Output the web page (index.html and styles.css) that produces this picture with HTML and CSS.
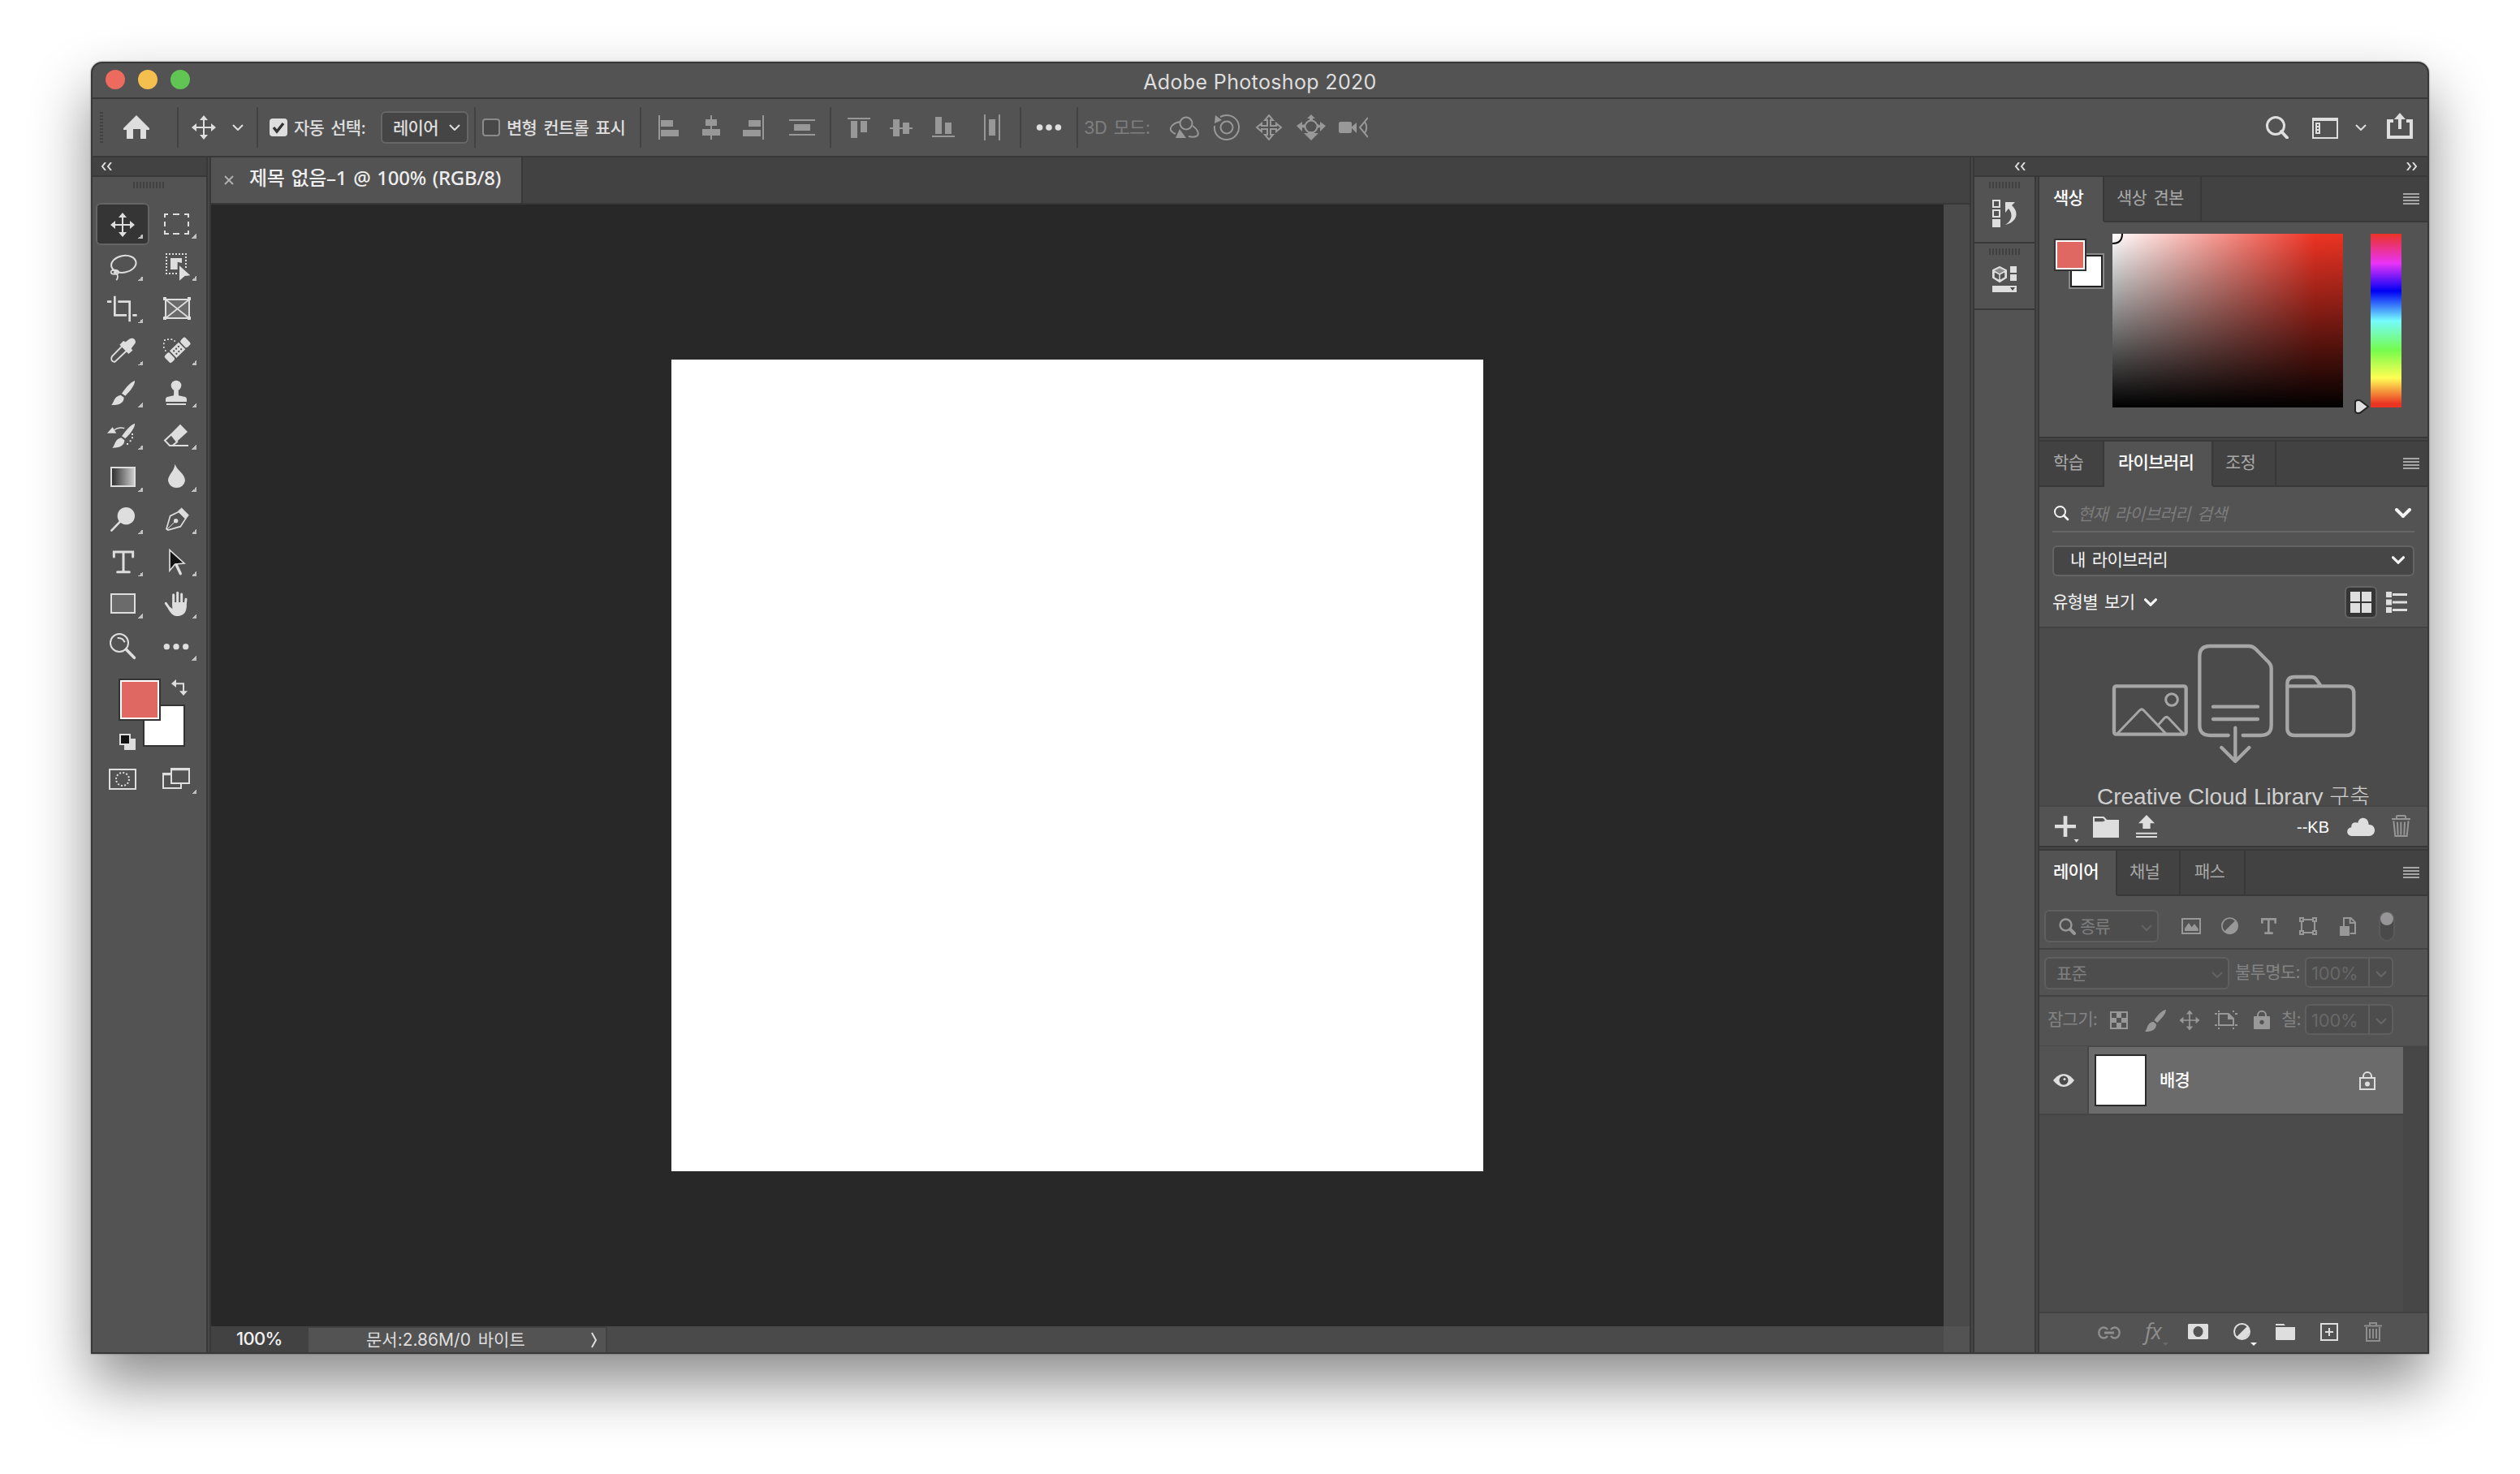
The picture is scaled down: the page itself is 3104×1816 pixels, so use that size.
FILE: index.html
```html
<!DOCTYPE html>
<html lang="ko">
  <head>
    <meta charset="UTF-8" />
    <meta name="viewport" content="width=device-width, initial-scale=1.0" />
    <title>Adobe Photoshop 2020</title>

    <link rel="stylesheet" href="styles.css">
  </head>
  <body>
    <svg class="sprite">
      <symbol id="chevron" viewBox="0 0 14 8">
        <path d="M1 1l6 6 6-6" fill="none" stroke="currentColor" stroke-width="2" />
      </symbol>
      <symbol id="chevron-bold" viewBox="0 0 20 12">
        <path d="M2 2l8 8 8-8" fill="none" stroke="currentColor" stroke-width="4" stroke-linecap="round" />
      </symbol>
      <symbol id="collapse" viewBox="0 0 14 10">
        <path d="M6 0L2 5l4 5M13 0L9 5l4 5" fill="none" stroke="currentColor" stroke-width="2" />
      </symbol>
      <symbol id="move" viewBox="0 0 30 30">
        <path d="M14 5h2v9h9v2h-9v9h-2v-9H5v-2h9z" />
        <path d="M15 0l5 6H10zM15 30l5-6H10zM0 15l6-5v10zM30 15l-6-5v10z" />
      </symbol>
    </svg>

    <div class="window">
      <header class="titlebar">
        <div class="lights">
          <span class="light red"></span>
          <span class="light yellow"></span>
          <span class="light green"></span>
        </div>
        <div class="app-title">Adobe Photoshop 2020</div>
      </header>

      <div class="options">
        <span class="options-grip"></span>
        <svg class="home" width="32" height="30" viewBox="0 0 32 30"><path d="M16 0l16 16v2h-4v11h-7V17H12v12H4V18H0v-2z" /></svg>
        <span class="sep sep-home"></span>
        <svg class="current-tool" width="30" height="30"><use href="#move" /></svg>
        <svg class="tool-chevron" width="14" height="8"><use href="#chevron" /></svg>
        <span class="sep sep-tool"></span>
        <span class="check checked">
          <svg width="22" height="22" viewBox="0 0 22 22"><path d="M5 11l4 5 8-10" fill="none" stroke="#333" stroke-width="3.4" /></svg>
        </span>
        <span class="label auto-select">자동 선택:</span>
        <div class="select layer-select">
          <span>레이어</span>
          <svg width="14" height="8"><use href="#chevron" /></svg>
        </div>
        <span class="sep sep-check"></span>
        <span class="check unchecked"></span>
        <span class="label transform">변형 컨트롤 표시</span>
        <span class="sep sep-transform"></span>

        <div class="align-group">
          <svg width="32" height="32" viewBox="0 0 32 32"><path d="M3 1h2v30H3zM6 7h15v8H6zM6 19h22v8H6z" /></svg>
          <svg width="32" height="32" viewBox="0 0 32 32"><path d="M15 1h2v30h-2zM9 6h14v8H9zM5 18h22v8H5z" /></svg>
          <svg width="32" height="32" viewBox="0 0 32 32"><path d="M27 1h2v30h-2zM10 7h15v8H10zM3 19h22v8H3z" /></svg>
          <svg class="distribute" width="32" height="32" viewBox="0 0 32 32"><path d="M0 6h32v2H0zM0 24h32v2H0zM6 12h20v8H6z" /></svg>
        </div>
        <span class="sep"></span>
        <div class="align-group">
          <svg width="32" height="32" viewBox="0 0 32 32"><path d="M2 4h28v2H2zM6 8h8v21H6zM18 8h8v14h-8z" /></svg>
          <svg width="32" height="32" viewBox="0 0 32 32"><path d="M2 16h28v2H2zM6 6h8v21H6zM18 10h8v14h-8z" /></svg>
          <svg width="32" height="32" viewBox="0 0 32 32"><path d="M2 26h28v2H2zM6 3h8v21H6zM18 10h8v14h-8z" /></svg>
          <svg class="distribute" width="32" height="32" viewBox="0 0 32 32"><path d="M6 0h2v32H6zM24 0h2v32h-2zM12 6h8v20h-8z" /></svg>
        </div>
        <span class="sep"></span>
        <svg class="more" width="32" height="8" viewBox="0 0 32 8"><circle cx="4.600" cy="4" r="3.800" /><circle cx="16" cy="4" r="3.800" /><circle cx="27.400" cy="4" r="3.800" /></svg>
        <span class="sep"></span>
        <span class="label mode">3D 모드:</span>
        <div class="mode-group">
          <svg width="36" height="32" viewBox="0 0 36 32">
            <g fill="none" stroke="currentColor" stroke-width="2">
              <circle cx="20" cy="11" r="7.500" />
              <path d="M13 9C5 10 0 15 1 19c1 3 4 4 6 5M28 14c6 4 8 9 6 12-2 2-6 2-11 1" />
            </g>
            <path d="M12 18l8 11H7z" />
          </svg>
          <svg width="36" height="32" viewBox="0 0 36 32">
            <g fill="none" stroke="currentColor" stroke-width="2">
              <circle cx="18" cy="16" r="7.500" />
              <path d="M10 3C18-1 28 1 32 10c4 11-4 21-14 21C8 31 2 23 3 14" />
            </g>
            <path d="M4 1l8 6-9 4z" />
          </svg>
          <svg width="36" height="32" viewBox="0 0 36 32">
            <path d="M18 1l5 6h-3v7h7v-3l6 5-6 5v-3h-7v7h3l-5 6-5-6h3v-7H9v3l-6-5 6-5v3h7V7h-3z" fill="none" stroke="currentColor" stroke-width="2" />
          </svg>
          <svg width="36" height="32" viewBox="0 0 36 32">
            <circle cx="18" cy="15" r="7.500" fill="none" stroke="currentColor" stroke-width="2" />
            <path d="M18 0l5 5h-3v3h-4V5h-3zM0 14l7-5v4l4-1v5l-4-1v5zM36 14l-7-5v4l-4-1v5l4-1v5zM18 32l9-9-5 0v-2h-8v2H9z" />
          </svg>
          <svg width="36" height="32" viewBox="0 0 36 32">
            <rect y="9" width="16" height="14" rx="2" />
            <path d="M15 16l7-6v13z" />
            <path d="M36 4L26 16l10 12M32 9c3 4 3 10 0 14" fill="none" stroke="currentColor" stroke-width="2" />
          </svg>
        </div>

        <div class="options-right">
          <svg width="28" height="28" viewBox="0 0 28 28"><circle cx="12" cy="12" r="10.500" fill="none" stroke="currentColor" stroke-width="3" /><path d="M19 19l7 7.500" stroke="currentColor" stroke-width="4" stroke-linecap="round" /></svg>
          <svg class="arrange" width="32" height="26" viewBox="0 0 32 26"><path d="M0 0h32v26H0zM2 4v20h28V4z" fill-rule="evenodd" /><path d="M4 6h6v14H4zM6 8v2h2V8zM6 12v2h2v-2zM6 16v2h2v-2z" fill-rule="evenodd" /></svg>
          <svg class="arrange-chevron" width="14" height="8"><use href="#chevron" /></svg>
          <svg class="share" width="32" height="32" viewBox="0 0 32 32"><path d="M16 0l7 8h-5v12h-4V8H9zM0 8h8v4H4v16h24V12h-4V8h8v24H0z" /></svg>
        </div>
      </div>

      <div class="workspace">
        <aside class="toolbox">
          <div class="dock-header toolbox-header">
            <svg width="14" height="10"><use href="#collapse" /></svg>
          </div>
          <span class="grip"></span>

          <div class="tools">
            <div class="tool active">
              <svg width="66" height="52" viewBox="0 0 66 52"><use href="#move" x="18" y="12" width="30" height="30" /></svg>
            </div>
            <div class="tool">
              <svg width="66" height="52" viewBox="252 180 198 156"><path d="M309 234v-12h12M339 222h24M381 222h15v12M396 249v18M396 282v12h-15M363 294h-24M324 294h-15v-12M309 267v-18" fill="none" stroke="currentColor" stroke-width="6" /></svg>
            </div>
            <div class="tool">
              <svg width="66" height="52" viewBox="54 336 198 156"><g fill="none" stroke="currentColor" stroke-width="6"><ellipse cx="157" cy="406" rx="46" ry="31" transform="rotate(-10 157 406)" /><ellipse cx="124" cy="436" rx="14" ry="8" stroke-width="5" /><path d="M120 434c14 6 20 18 10 32M136 430l-16 12" stroke-width="5" /></g></svg>
            </div>
            <div class="tool">
              <svg width="66" height="52" viewBox="252 336 198 156"><path d="M312 369h78M315 378v66M387 378v42M324 441h36" fill="none" stroke="currentColor" stroke-width="6" stroke-dasharray="6 6" /><path d="M330 384h42v18l-16-4v28h-26zM363 412l40 36-20 2-20 17z" /></svg>
            </div>
            <div class="tool">
              <svg width="66" height="52" viewBox="54 492 198 156"><path d="M96 545h16M124 524v71h44M136 545h43v74M190 595h16" fill="none" stroke="currentColor" stroke-width="8" /></svg>
            </div>
            <div class="tool no-corner">
              <svg width="66" height="52" viewBox="252 492 198 156"><rect x="312" y="537" width="87" height="69" fill="#6b6b6b" stroke="currentColor" stroke-width="6" /><path d="M312 537l87 69M399 537l-87 69" stroke="currentColor" stroke-width="5" /><path d="M303 528h12v12h-12zM393 528h12v12h-12zM303 600h12v12h-12zM393 600h12v12h-12z" /></svg>
            </div>
            <div class="tool">
              <svg width="66" height="52" viewBox="54 648 198 156"><path d="M154 706l-40 41c-6 10-1 22 11 20l44-42" fill="none" stroke="currentColor" stroke-width="6" /><path d="M142 704l14-14 8 4 16-12c12-6 24 4 20 16l-15 20 5 7-15 13z" /></svg>
            </div>
            <div class="tool">
              <svg width="66" height="52" viewBox="252 648 198 156"><g transform="rotate(-44 356 724)"><rect x="303" y="706" width="25" height="36" rx="7" /><rect x="384" y="706" width="25" height="36" rx="7" /><rect x="333" y="706" width="46" height="36" /><g fill="#535353"><circle cx="344" cy="717" r="3.500" /><circle cx="356" cy="717" r="3.500" /><circle cx="368" cy="717" r="3.500" /><circle cx="344" cy="731" r="3.500" /><circle cx="356" cy="731" r="3.500" /><circle cx="368" cy="731" r="3.500" /></g></g><path d="M303 697h5v6h-5zM303 711h5v6h-5zM309 724h5v5h-5zM306 685h6v5h-6zM318 682h6v5h-6zM331 682h6v5h-6zM343 688h5v5h-5z" /></svg>
            </div>
            <div class="tool">
              <svg width="66" height="52" viewBox="54 804 198 156"><path d="M198 837c2 12-14 36-35 56l-13-9c14-20 32-42 48-47zM146 890l12 9c0 18-14 29-47 28 10-6 8-32 35-37z" /></svg>
            </div>
            <div class="tool">
              <svg width="66" height="52" viewBox="252 804 198 156"><circle cx="351" cy="855" r="19" /><path d="M343 868h16l1 24 24 5q6 2 6 8v10h-78v-10q0-6 6-8l24-5zM315 921h72v6h-72z" /></svg>
            </div>
            <div class="tool">
              <svg width="66" height="52" viewBox="54 960 198 156"><path d="M198 995c2 12-14 36-35 56l-13-9c14-20 32-42 48-47zM148 1048l12 9c0 18-14 29-45 28 10-6 8-32 33-37zM96 1031l20-22 14 22z" /><path d="M122 1019q16-12 38-6" fill="none" stroke="currentColor" stroke-width="4" /><path d="M186 1032h6v6h-6zM186 1045h6v6h-6zM179 1057h6v6h-6zM168 1068h6v6h-6z" /></svg>
            </div>
            <div class="tool">
              <svg width="66" height="52" viewBox="252 960 198 156"><path d="M366 998l27 28-42 38-22-28z" /><path d="M333 1036l-24 22 18 19h10l20-16M325 1077h71" fill="none" stroke="currentColor" stroke-width="6" /></svg>
            </div>
            <div class="tool">
              <svg width="66" height="52" viewBox="54 1116 198 156"><defs><linearGradient id="tool-gradient"><stop offset="0" stop-color="#2b2b2b" /><stop offset="1" stop-color="#d0d0d0" /></linearGradient></defs><rect x="111" y="1158" width="87" height="69" fill="url(#tool-gradient)" stroke="currentColor" stroke-width="6" /></svg>
            </div>
            <div class="tool">
              <svg width="66" height="52" viewBox="252 1116 198 156"><path d="M346 1145c10 26 38 36 38 62a32 32 0 0 1-63 0c0-24 24-34 25-62z" /></svg>
            </div>
            <div class="tool">
              <svg width="66" height="52" viewBox="54 102 198 156"><circle cx="166" cy="167" r="32" /><path d="M144 188l-32 33" stroke="currentColor" stroke-width="8" stroke-linecap="round" /></svg>
            </div>
            <div class="tool">
              <svg width="66" height="52" viewBox="252 102 198 156"><path d="M362 151l-33 16-14 48 6 4 46-13 20-31z" fill="none" stroke="currentColor" stroke-width="5" /><path d="M371 138l26 26-11 14-28-28zM317 217l30-29" stroke="currentColor" stroke-width="3" /><circle cx="350" cy="185" r="8" /></svg>
            </div>
            <div class="tool">
              <svg width="66" height="52" viewBox="54 258 198 156"><path d="M121 318v-18h70v18M156 300v74M134 374h44" fill="none" stroke="currentColor" stroke-width="9" stroke-linecap="round" /></svg>
            </div>
            <div class="tool">
              <svg width="66" height="52" viewBox="252 258 198 156"><path d="M350 344l17 36" stroke="currentColor" stroke-width="10" stroke-linecap="round" /><path d="M327 293v76l20-24 34-3z" fill="#111" stroke="currentColor" stroke-width="5" /></svg>
            </div>
            <div class="tool">
              <svg width="66" height="52" viewBox="54 414 198 156"><rect x="111" y="456" width="87" height="69" fill="#6b6b6b" stroke="currentColor" stroke-width="6" /></svg>
            </div>
            <div class="tool">
              <svg width="66" height="52" viewBox="252 414 198 156"><path d="M341 458v40M356 451v40M371 456v40M387 475l-3 28M313 490l16 23" stroke="currentColor" stroke-width="9" stroke-linecap="round" /><path d="M337 486h43l9 10c2 28-12 41-32 41-19 0-27-12-36-28l8-5 8 6z" /></svg>
            </div>
            <div class="tool no-corner">
              <svg width="66" height="52" viewBox="54 570 198 156"><circle cx="141" cy="636" r="33" fill="none" stroke="currentColor" stroke-width="6" /><path d="M134 618q20-2 27 16" fill="none" stroke="currentColor" stroke-width="6" /><path d="M166 660l30 31" stroke="currentColor" stroke-width="11" stroke-linecap="round" /></svg>
            </div>
            <div class="tool">
              <svg width="66" height="52" viewBox="252 570 198 156"><circle cx="316" cy="650" r="11" /><circle cx="351" cy="650" r="11" /><circle cx="386" cy="650" r="11" /></svg>
            </div>
          </div>

          <div class="tool-colors">
            <span class="bg-color"></span>
            <span class="fg-color"></span>
            <svg class="swap" width="20" height="20" viewBox="333 771 60 60"><path d="M345 787h33v30" fill="none" stroke="currentColor" stroke-width="6" /><path d="M333 787l18-16v30zM378 831l-15-17h30z" /></svg>
            <svg class="reset" width="20" height="20" viewBox="141 972 60 60"><path d="M159 990h42v42h-42z" /><path d="M144 975h36v36h-36z" fill="#111" stroke="currentColor" stroke-width="6" /></svg>
          </div>

          <div class="tools modes">
            <div class="tool no-corner">
              <svg width="66" height="52" viewBox="54 1062 198 156"><path d="M105 1104h96v72h-96z" fill="none" stroke="currentColor" stroke-width="6" /><circle cx="153" cy="1140" r="24" fill="none" stroke="currentColor" stroke-width="6" stroke-dasharray="6 6.560" /></svg>
            </div>
            <div class="tool">
              <svg width="66" height="52" viewBox="252 1062 198 156"><path d="M330 1119h-27v54h66v-15M333 1101h66v54h-66z" fill="none" stroke="currentColor" stroke-width="6" /><path d="M300 1116h30v10h-30zM330 1098h72v10h-72z" /></svg>
            </div>
          </div>
        </aside>

        <span class="gutter"></span>

        <main class="document">
          <div class="doc-tabs">
            <div class="doc-tab">
              <svg width="12" height="12" viewBox="0 0 12 12"><path d="M1 1l10 10M11 1L1 11" stroke="currentColor" stroke-width="2" /></svg>
              <span>제목 없음–1 @ 100% (RGB/8)</span>
            </div>
          </div>
          <div class="stage">
            <div class="pasteboard">
              <div class="artboard"></div>
            </div>
            <div class="scroll-y"></div>
          </div>
          <div class="statusbar">
            <div class="zoom">100%</div>
            <div class="doc-size">
              <span>문서:2.86M/0 바이트</span>
              <svg width="8" height="20" viewBox="0 0 8 20"><path d="M1 1l5 9-5 9" fill="none" stroke="currentColor" stroke-width="2" /></svg>
            </div>
            <div class="scroll-x"></div>
            <div class="scroll-corner"></div>
          </div>
        </main>

        <span class="gutter"></span>

        <aside class="dock">
          <div class="dock-header">
            <svg class="expand-strip" width="14" height="10"><use href="#collapse" /></svg>
            <svg class="collapse-panels" width="14" height="10"><use href="#collapse" /></svg>
          </div>
          <div class="dock-body">
            <div class="strip">
              <div class="strip-item">
                <span class="grip"></span>
                <svg width="30" height="34" viewBox="0 0 30 34"><path d="M1 1h8v8H1zM1 13h8v8H1z" fill="none" stroke="currentColor" stroke-width="2" /><path d="M0 24h10v10H0zM16 3h12l-4 4c10 9 6 21-8 24 8-5 10-13 4-20l-4 5z" /></svg>
              </div>
              <div class="strip-item">
                <span class="grip"></span>
                <svg width="30" height="32" viewBox="0 0 30 32"><path d="M1 5l8-4 8 4v9l-8 5-8-5z" fill="#8a8a8a" stroke="currentColor" stroke-width="2" /><path d="M2 6l7 4v8l-7-4zM16 6l-7 4v8l7-4z" fill="#535353" stroke="currentColor" stroke-width="1.500" /><path d="M22 0h8v8h-8zM22 10h8v8h-8zM0 24h30v8H0z" /><path d="M22 26h6l-3 4z" fill="#444" /></svg>
              </div>
            </div>
            <span class="gutter"></span>

            <div class="panels">
              <section class="panel">
                <div class="tabs">
                  <div class="tab active color-tab">색상</div>
                  <div class="tab swatch-tab">색상 견본</div>
                  <div class="tabs-rest"><span class="menu"></span></div>
                </div>
                <div class="color-body">
                  <div class="color-swatches">
                    <span class="bg-swatch"></span>
                    <span class="fg-swatch"></span>
                  </div>
                  <div class="color-field">
                    <svg width="13" height="13" viewBox="0 0 13 13"><path d="M12 0Q12 12 0 12" fill="none" stroke="#000" stroke-width="2" /></svg>
                  </div>
                  <svg class="hue-arrow" width="18" height="18" viewBox="0 0 18 18"><path d="M1 4q0-3 4-3 2 0 3 1l9 7-9 7q-1 1-3 1-4 0-4-3z" fill="#e0e0e0" stroke="#222" stroke-width="2" /></svg>
                  <div class="hue"></div>
                </div>
              </section>

              <section class="panel library">
                <div class="tabs">
                  <div class="tab learn-tab">학습</div>
                  <div class="tab active library-tab">라이브러리</div>
                  <div class="tab adjust-tab">조정</div>
                  <div class="tabs-rest"><span class="menu"></span></div>
                </div>
                <div class="library-top">
                  <div class="search">
                    <svg width="19" height="19" viewBox="0 0 19 19"><circle cx="7.500" cy="7.500" r="6.500" fill="none" stroke="currentColor" stroke-width="2" /><path d="M12 12l5 5" stroke="currentColor" stroke-width="2.600" stroke-linecap="round" /></svg>
                    <span>현재 라이브러리 검색</span>
                    <svg class="search-chevron" width="20" height="12"><use href="#chevron-bold" /></svg>
                  </div>
                  <div class="library-select">
                    <span>내 라이브러리</span>
                    <svg width="16" height="10"><use href="#chevron-bold" /></svg>
                  </div>
                  <div class="view-row">
                    <span>유형별 보기</span>
                    <svg class="view-chevron" width="16" height="10"><use href="#chevron-bold" /></svg>
                    <div class="grid-view">
                      <svg width="26" height="26" viewBox="0 0 26 26"><path d="M0 0h12v12H0zM14 0h12v12H14zM0 14h12v12H0zM14 14h12v12H14z" /></svg>
                    </div>
                    <svg class="list-view" width="26" height="26" viewBox="0 0 26 26"><path d="M0 0h7v7H0zM0 9.500h7v7H0zM0 19h7v7H0zM8 2h18v3H8zM8 11.500h18v3H8zM8 21h18v3H8z" /></svg>
                  </div>
                </div>
                <div class="library-empty">
                  <svg width="478" height="170" viewBox="36 12 1434 510">
                    <g fill="none" stroke="currentColor" stroke-width="13" stroke-linecap="round" stroke-linejoin="round">
                      <rect x="312" y="226" width="266" height="178" rx="8" />
                      <circle cx="525" cy="276" r="22" stroke-width="9" />
                      <path d="M324 401l83-86q7-7 14 0l82 86M475 370l24-27q6-6 13 0l55 58" stroke-width="9" />
                      <path d="M734 408h-68q-38 0-38-38V116q0-38 38-38h144q14 0 24 10l49 49q10 10 10 24v209q0 38-38 38h-67M678 302h165M678 348h165M760 380v120M709 453l51 51 51-51" />
                      <path d="M952 226h220q26 0 26 26v130q0 26-26 26H978q-26 0-26-26V218q0-26 26-26h62q12 0 18 8l16 22" />
                    </g>
                  </svg>
                  <p>Creative Cloud Library <span>구축</span></p>
                </div>
                <div class="library-footer">
                  <svg class="add" width="30" height="48" viewBox="93 672 90 144"><path d="M125 706h14v32h32v13h-32v32h-14v-32H93v-13h32zM164 792h18l-9 12z" /></svg>
                  <svg class="new-folder" width="32" height="48" viewBox="234 672 96 144"><path d="M234 708h40l12 12h44v66h-96zM240 714v13h30l9-4-8-9z" fill-rule="evenodd" /></svg>
                  <svg class="upload" width="26" height="48" viewBox="393 672 78 144"><path d="M432 702l30 31h-16v20h-28v-20h-16zM393 767h78v6h-78zM393 780h78v6h-78z" /></svg>
                  <span class="size">--KB</span>
                  <svg class="cloud" width="34" height="48" viewBox="1173 672 102 144"><path d="M1190 780a16 16 0 0 1-1-32q-2-18 16-18 6 0 8 1c4-26 40-24 40 7 28-2 30 40 2 42z" /></svg>
                  <svg class="trash" width="23" height="48" viewBox="1338 672 69 144"><path d="M1356 714v-6q0-3 3-3h27q3 0 3 3v6M1338 717h69M1345 724l6 56h43l6-56M1359 728l2 48M1372 728v48M1386 728l-2 48" fill="none" stroke="currentColor" stroke-width="6" /></svg>
                </div>
              </section>

              <section class="panel layers">
                <div class="tabs">
                  <div class="tab active layer-tab">레이어</div>
                  <div class="tab channel-tab">채널</div>
                  <div class="tab path-tab">패스</div>
                  <div class="tabs-rest"><span class="menu"></span></div>
                </div>

                <div class="filter-row">
                  <div class="field kind">
                    <svg width="21" height="21" viewBox="0 0 21 21"><circle cx="8.500" cy="8.500" r="7" fill="none" stroke="currentColor" stroke-width="2.400" /><path d="M14 14l5 5" stroke="currentColor" stroke-width="4" stroke-linecap="round" /></svg>
                    <span>종류</span>
                    <svg class="field-chevron" width="14" height="8"><use href="#chevron" /></svg>
                  </div>
                  <svg class="filter-image" width="24" height="40" viewBox="561 243 72 120"><path d="M561 273h72v60h-72zM567 279v48h60v-48z" fill-rule="evenodd" /><path d="M573 321v-10l15-20 11 16 10-12 14 18v8z" /></svg>
                  <svg class="filter-adjust" width="21" height="40" viewBox="708 243 63 120"><circle cx="739.500" cy="302" r="29" fill="none" stroke="currentColor" stroke-width="5" /><path d="M761 281l-43 43a30 30 0 0 0 43-43z" /></svg>
                  <svg class="filter-type" width="19" height="40" viewBox="855 243 57 120"><path d="M859 290v-13h49v13M883 277v52M871 329h25" fill="none" stroke="currentColor" stroke-width="8" stroke-linecap="round" /></svg>
                  <svg class="filter-shape" width="22" height="40" viewBox="996 243 66 120"><path d="M1005 279h48v48h-48z" fill="none" stroke="currentColor" stroke-width="6" /><path d="M999 273h12v12h-12zM1047 273h12v12h-12zM999 321h12v12h-12zM1047 321h12v12h-12z" fill="#535353" stroke="currentColor" stroke-width="6" /></svg>
                  <svg class="filter-smart" width="20" height="40" viewBox="1146 243 60 120"><path d="M1161 303v-30h26l16 16v41h-19M1184 273v18h19" fill="none" stroke="currentColor" stroke-width="6" /><path d="M1146 303h36v36h-36z" /></svg>
                  <div class="filter-toggle"></div>
                </div>

                <div class="blend-row">
                  <div class="field blend">
                    <span>표준</span>
                    <svg class="field-chevron" width="14" height="8"><use href="#chevron" /></svg>
                  </div>
                  <span class="row-label opacity-label">불투명도:</span>
                  <div class="number">
                    <span>100%</span>
                    <i><svg width="14" height="8"><use href="#chevron" /></svg></i>
                  </div>
                </div>

                <div class="lock-row">
                  <span class="row-label lock-label">잠그기:</span>
                  <svg class="lock-pixels" width="22" height="40" viewBox="297 591 66 120"><path d="M297 618h66v66h-66zM303 624v18h18v-18zM339 624v18h18v-18zM321 642v18h18v-18zM303 660v18h18v-18zM339 660v18h18v-18z" fill-rule="evenodd" /></svg>
                  <svg class="lock-brush" width="26" height="40" viewBox="426 591 78 120"><path d="M504 612c0 14-14 30-32 48l-12-9c12-18 30-38 44-39zM457 656l11 9c0 18-12 28-42 28 10-8 6-34 31-37z" /></svg>
                  <svg class="lock-move" width="26" height="40" viewBox="-0.500 -5 31 40"><use href="#move" x="0" y="0" width="30" height="30" /></svg>
                  <svg class="lock-artboard" width="28" height="40" viewBox="684 591 84 120"><path d="M699 627h36l18 18v24h-54z" fill="none" stroke="currentColor" stroke-width="6" /><path d="M732 624v24h24zM684 624h9v6h-9zM696 615h6v6h-6zM750 615h6v6h-6zM759 624h9v6h-9zM684 666h9v6h-9zM759 666h9v6h-9zM696 678h6v6h-6zM750 678h6v6h-6z" /></svg>
                  <svg class="lock-all" width="20" height="40" viewBox="828 591 60 120"><path d="M843 636v-4a15 15 0 0 1 30 0v4" fill="none" stroke="currentColor" stroke-width="6" /><path d="M831 636h54q3 0 3 3v42q0 3-3 3h-54q-3 0-3-3v-42q0-3 3-3zM858 650a8 8 0 1 0 .1 0z" fill-rule="evenodd" /></svg>
                  <span class="row-label fill-label">칠:</span>
                  <div class="number">
                    <span>100%</span>
                    <i><svg width="14" height="8"><use href="#chevron" /></svg></i>
                  </div>
                </div>

                <div class="layer-area">
                  <div class="layer-list">
                    <div class="layer">
                      <div class="visibility">
                        <svg width="26" height="16" viewBox="0 0 26 16"><path d="M0 8C8-2.500 18-2.500 26 8 18 18.500 8 18.500 0 8z" /><circle cx="13" cy="8" r="5.500" fill="#4a4a4a" /><circle cx="14" cy="6.500" r="1.500" /></svg>
                      </div>
                      <div class="layer-main">
                        <span class="thumb"></span>
                        <span class="layer-name">배경</span>
                        <svg width="20" height="23" viewBox="0 0 20 23"><path d="M5 8V6a5 5 0 0 1 10 0v2M1 8h18v14H1z" fill="none" stroke="currentColor" stroke-width="2" /><circle cx="10" cy="15.500" r="3" /></svg>
                      </div>
                    </div>
                  </div>
                  <div class="layer-scroll"></div>
                </div>

                <div class="layers-footer">
                  <svg class="link" width="28" height="48" viewBox="0 0 28 48"><path d="M12 20a6 6.500 0 1 0 0 8M16 20a6 6.500 0 1 1 0 8" fill="none" stroke="currentColor" stroke-width="2.400" /><path d="M8 22.500h12v3H8z" /></svg>
                  <div class="fx">fx<svg width="7" height="4" viewBox="0 0 8 4"><path d="M0 0h8L4 4z" /></svg></div>
                  <svg class="mask" width="25" height="48" viewBox="0 0 25 48"><path d="M1 13h23l1 1v17l-1 1H1l-1-1V14zM12.500 16a6 6.500 0 1 0 .1 0z" fill-rule="evenodd" /></svg>
                  <svg class="adjust" width="29" height="48" viewBox="0 0 29 48"><circle cx="10.500" cy="22.500" r="9.500" fill="none" stroke="currentColor" stroke-width="2" /><path d="M17.500 15.500l-14 14a10 10 0 0 0 14-14z" /><path d="M21 36h8l-4 4z" fill="#fff" /></svg>
                  <svg class="group" width="24" height="48" viewBox="0 0 24 48"><path d="M0 13h10l2 2H0zM0 17h24v15q0 1-1 1H1q-1 0-1-1z" /></svg>
                  <svg class="new-layer" width="22" height="48" viewBox="0 0 22 48"><path d="M1 13h20v20H1z" fill="none" stroke="currentColor" stroke-width="2" /><path d="M10 18h2v4h4v2h-4v4h-2v-4H6v-2h4z" /></svg>
                  <svg class="delete" width="22" height="48" viewBox="0 0 22 48"><path d="M7 15v-3h8v3M0 15.500h22M3 17v17h16V17M7 19v12M11 19v12M15 19v12" fill="none" stroke="currentColor" stroke-width="2" /></svg>
                </div>
              </section>
            </div>
          </div>
        </aside>
      </div>
    </div>
  </body>
</html>
```

FILE: styles.css
```css
* {
  box-sizing: border-box;
}

body {
  min-height: 1816px;
  margin: 0;
  padding: 76px 112px 0;
  background: #fff;
  font-family: Inter, "Noto Sans CJK KR", sans-serif;
  font-size: 21px;
  line-height: 1;
  letter-spacing: -0.7px;
  word-spacing: 3px;
  white-space: nowrap;
  color: #dedede;
}

svg {
  display: block;
  flex: none;
  fill: currentColor;
}

.sprite {
  position: absolute;
  width: 0;
  height: 0;
}

.window {
  display: flex;
  flex-direction: column;
  width: 2880px;
  height: 1592px;
  border: 2px solid #383838;
  border-radius: 14px 14px 0 0;
  background: #535353;
  box-shadow: 0 0 2px rgba(0, 0, 0, 0.5), 0 36px 72px rgba(0, 0, 0, 0.46);
  overflow: hidden;
}

/* title bar */

.titlebar {
  position: relative;
  flex: none;
  height: 44px;
  border-bottom: 2px solid #383838;
}

.lights {
  position: absolute;
  top: 8px;
  left: 16px;
  display: flex;
  gap: 16px;
}

.light {
  width: 24px;
  height: 24px;
  border-radius: 50%;
}

.red {
  background: #ec6a5e;
}

.yellow {
  background: #f5bf4f;
}

.green {
  background: #61c554;
}

.app-title {
  text-align: center;
  font-size: 25px;
  line-height: 46px;
  letter-spacing: 0.35px;
  word-spacing: 0;
}

/* options bar */

.options {
  display: flex;
  flex: none;
  align-items: center;
  height: 72px;
  border-bottom: 2px solid #383838;
}

.options-grip {
  width: 4px;
  height: 38px;
  margin-left: 9px;
  background: repeating-linear-gradient(#414141 0 2px, transparent 2px 4px);
}

.home {
  margin-left: 25px;
}

.sep {
  width: 2px;
  height: 50px;
  margin-left: 18px;
  background: #424242;
}

.sep-home {
  margin-left: 34px;
}

.current-tool {
  margin-left: 16px;
}

.tool-chevron {
  margin-left: 20px;
}

.sep-tool {
  margin-left: 16px;
}

.label {
  font-weight: 500;
}

.check {
  width: 22px;
  height: 22px;
  border-radius: 4px;
}

.checked {
  margin-left: 14px;
  background: #dedede;
}

.unchecked {
  margin-left: 8px;
  border: 2px solid #8a8a8a;
  background: #484848;
}

.auto-select {
  width: 99px;
  margin-left: 8px;
}

.select {
  display: flex;
  align-items: center;
  justify-content: space-between;
  width: 108px;
  height: 40px;
  margin-left: 8px;
  padding: 0 8px 0 13px;
  border: 2px solid #666;
  border-radius: 6px;
  background: #454545;
  font-weight: 500;
}

.sep-check {
  margin-left: 7px;
}

.transform {
  width: 154px;
  margin-left: 8px;
}

.sep-transform {
  margin-left: 10px;
}

.align-group {
  display: flex;
  gap: 20px;
  margin-left: 18px;
  color: #989898;
}

.distribute {
  margin-left: 8px;
}

.more {
  margin-left: 18px;
}

.mode {
  width: 86px;
  margin-left: 7px;
  font-size: 22px;
  font-weight: 400;
  color: #7f7f7f;
}

.mode-group {
  display: flex;
  gap: 16px;
  margin-left: 20px;
  color: #989898;
}

.options-right {
  display: flex;
  align-items: center;
  margin: 0 18px 0 auto;
}

.arrange {
  margin: 2px 0 0 29px;
}

.arrange-chevron {
  margin-left: 21px;
}

.share {
  margin: -4px 0 0 25px;
}

/* workspace */

.workspace {
  display: flex;
  flex: 1;
}

.gutter {
  flex: none;
  width: 6px;
  border: solid #383838;
  border-width: 0 2px;
  background: #474747;
}

.dock-header {
  display: flex;
  flex: none;
  align-items: center;
  height: 24px;
  border-bottom: 2px solid #383838;
  background: #424242;
}

.grip {
  display: block;
  width: 38px;
  height: 8px;
  background: repeating-linear-gradient(90deg, #414141 0 2px, transparent 2px 4px);
}

.toolbox {
  flex: none;
  width: 140px;
}

.toolbox-header {
  padding-left: 10px;
}

.toolbox > .grip {
  margin: 6px 0 18px 50px;
}

.tools {
  display: grid;
  grid-template-columns: 66px 66px;
  grid-auto-rows: 52px;
  margin-left: 4px;
}

.tool {
  position: relative;
}

.tool.active {
  border: 2px solid #646464;
  border-radius: 6px;
  background: #353535;
}

.tool.active > svg {
  margin: -2px;
}

.tool::after {
  content: "";
  position: absolute;
  right: 8px;
  bottom: 8px;
  width: 6px;
  height: 6px;
  background: linear-gradient(135deg, transparent 50%, #c0c0c0 50%);
}

.tool.active::after {
  right: 6px;
  bottom: 6px;
}

.tool.no-corner::after {
  display: none;
}

.tool-colors {
  position: relative;
  height: 112px;
}

.fg-color,
.bg-color {
  position: absolute;
  width: 52px;
  height: 52px;
  border: 2px solid #333;
}

.fg-color {
  top: 14px;
  left: 32px;
  background: #e06863;
  box-shadow: inset 0 0 0 2px #fff;
}

.bg-color {
  top: 46px;
  left: 62px;
  background: #fff;
}

.swap {
  position: absolute;
  top: 15px;
  left: 97px;
}

.reset {
  position: absolute;
  top: 82px;
  left: 33px;
}

/* document */

.document {
  display: flex;
  flex-direction: column;
  flex: none;
  width: 2166px;
}

.doc-tabs {
  height: 58px;
  border-bottom: 2px solid #383838;
  background: #424242;
}

.doc-tab {
  display: flex;
  align-items: center;
  gap: 19px;
  width: 384px;
  height: 56px;
  padding: 0 0 4px 16px;
  border-right: 2px solid #383838;
  background: #535353;
  font-family: "Noto Sans", "Noto Sans CJK KR", sans-serif;
  font-size: 24px;
  font-weight: 500;
  letter-spacing: -0.3px;
  word-spacing: 2px;
  color: #eee;
}

.doc-tab > span {
  margin-top: -2px;
}

.doc-tab > svg {
  margin-top: 4px;
  color: #b0b0b0;
}

.stage {
  display: flex;
  flex: 1;
}

.pasteboard {
  flex: 1;
  padding: 191px 0 0 567px;
  background: #282828;
}

.artboard {
  width: 1000px;
  height: 1000px;
  background: #fff;
}

.scroll-y {
  width: 32px;
  background: #4a4a4a;
}

.statusbar {
  display: flex;
  height: 32px;
  background: #424242;
}

.zoom {
  width: 120px;
  padding-left: 31px;
  font-weight: 500;
  font-size: 22px;
  line-height: 31px;
  color: #f2f2f2;
}

.doc-size {
  display: flex;
  align-items: center;
  justify-content: space-between;
  width: 368px;
  margin-top: 2px;
  padding: 0 10px 0 71px;
  border-right: 2px solid #424242;
  background: #535353;
  letter-spacing: 0;
}

.doc-size > span {
  margin-top: -2px;
}

.scroll-x {
  flex: 1;
  background: #4a4a4a;
}

.scroll-corner {
  width: 32px;
  background: #535353;
}

/* right dock */

.dock {
  display: flex;
  flex-direction: column;
  width: 558px;
}

.expand-strip {
  margin-left: 49px;
}

.collapse-panels {
  margin: 0 12px 0 auto;
  transform: scaleX(-1);
}

.dock-body {
  display: flex;
  flex: 1;
}

.strip {
  width: 74px;
}

.strip-item {
  height: 82px;
  padding-top: 6px;
  border-bottom: 2px solid #383838;
}

.strip-item > .grip {
  margin-left: 18px;
}

.strip-item > svg {
  margin: 14px 0 0 22px;
}

.panels {
  display: flex;
  flex-direction: column;
  gap: 2px;
  width: 478px;
  background: #474747;
}

.panel {
  border-bottom: 2px solid #383838;
  background: #535353;
}

.library,
.layers {
  border-top: 2px solid #383838;
}

.tabs {
  display: flex;
  height: 56px;
}

.tab {
  padding: 15px 0 0 17px;
  border: solid #383838;
  border-width: 0 2px 2px 0;
  background: #424242;
  color: #a8a8a8;
}

.tab.active {
  border-bottom-color: #535353;
  background: #535353;
  font-weight: 500;
  color: #fff;
}

.color-tab,
.learn-tab {
  width: 80px;
}

.swatch-tab {
  width: 120px;
  padding-left: 15px;
}

.library-tab {
  width: 134px;
}

.adjust-tab,
.channel-tab {
  width: 78px;
}

.adjust-tab {
  padding-left: 15px;
}

.layer-tab {
  width: 96px;
}

.channel-tab {
  padding-left: 15px;
}

.path-tab {
  width: 80px;
}

.tabs-rest {
  flex: 1;
  border-bottom: 2px solid #383838;
  background: #424242;
}

.menu {
  display: block;
  width: 20px;
  height: 14px;
  margin: 20px 10px 0 auto;
  background: repeating-linear-gradient(#a6a6a6 0 2px, transparent 2px 4px);
}

/* color panel */

.color-body {
  display: flex;
  height: 264px;
  padding: 14px 0 0 18px;
}

.color-swatches {
  position: relative;
  width: 62px;
  margin-top: 6px;
}

.fg-swatch,
.bg-swatch {
  position: absolute;
}

.fg-swatch {
  top: 0;
  left: 0;
  width: 40px;
  height: 40px;
  border: 2px solid #333;
  background: #e06863;
  box-shadow: inset 0 0 0 2px #fff;
}

.bg-swatch {
  top: 18px;
  left: 18px;
  width: 44px;
  height: 44px;
  border: 2px solid #8a8a8a;
  background: #fff;
  box-shadow: inset 0 0 0 2px #222;
}

.color-field {
  width: 284px;
  height: 214px;
  margin-left: 10px;
  background: linear-gradient(transparent, #000), linear-gradient(90deg, #fff, #ee3324 88%, #ea3323);
}

.hue-arrow {
  margin: 204px 0 0 14px;
}

.hue {
  width: 38px;
  height: 214px;
  margin-left: 2px;
  background: linear-gradient(#ea3323, #ea33f7 17%, #0000f5 33%, #75fbfd 50%, #75fb4c 67%, #ffff54 83%, #ea3323 98%);
}

/* library panel */

.library-top {
  height: 174px;
  padding: 0 16px;
  border-bottom: 2px solid #424242;
  color: #f4f4f4;
}

.search {
  display: flex;
  align-items: center;
  height: 56px;
  padding: 10px 4px 0 2px;
  border-bottom: 2px solid #666;
}

.search > span {
  margin: 2px 0 0 10px;
  font-style: italic;
  color: #7c7c7c;
}

.search-chevron {
  margin-left: auto;
}

.library-select {
  display: flex;
  align-items: center;
  justify-content: space-between;
  height: 38px;
  margin-top: 16px;
  padding: 0 10px 3px 20px;
  border: 2px solid #646464;
  border-radius: 6px;
  background: #464646;
}

.view-row {
  display: flex;
  align-items: center;
  height: 40px;
  margin-top: 12px;
}

.view-row > span {
  margin-top: -1px;
}

.view-chevron {
  margin-left: 12px;
}

.grid-view {
  margin-left: auto;
  padding: 5px;
  border: 2px solid #646464;
  border-radius: 6px;
  background: #353535;
  color: #dedede;
}

.list-view {
  margin: 0 9px 0 11px;
  color: #dedede;
}

.library-empty {
  height: 220px;
  border-bottom: 2px solid #464646;
  background: #4b4b4b;
  color: #a6a6a6;
  overflow: hidden;
}

.library-empty p {
  margin: 19px 0 0;
  text-align: center;
  font: 28px/38px "Liberation Sans", "Noto Sans CJK KR", sans-serif;
  letter-spacing: 0;
  word-spacing: 0;
  color: #cfcfcf;
}

.library-empty p span {
  font-weight: 300;
  font-size: 27px;
}

.library-footer {
  display: flex;
  height: 48px;
  padding: 0 21px 0 19px;
}

.new-folder {
  margin-left: 17px;
}

.upload {
  margin-left: 21px;
}

.size {
  margin-left: auto;
  font: 20px/50px "Liberation Sans", sans-serif;
  letter-spacing: 0;
  color: #fff;
}

.cloud {
  margin-left: 22px;
}

.trash {
  margin-left: 21px;
  color: #969696;
}

/* layers panel */

.layers {
  display: flex;
  flex-direction: column;
  flex: 1;
  border-bottom: 0;
}

.filter-row {
  display: flex;
  height: 66px;
  padding: 17px 0 0 6px;
  border-bottom: 2px solid #424242;
  color: #989898;
}

.field {
  display: flex;
  align-items: center;
  height: 40px;
  border: 2px solid #5f5f5f;
  border-radius: 6px;
  background: #4d4d4d;
  color: #7f7f7f;
}

.field-chevron {
  margin: 4px 6px 0 auto;
  color: #646464;
}

.kind {
  width: 141px;
  padding-left: 16px;
}

.kind > svg:first-child {
  color: #989898;
}

.kind > span {
  margin-left: 5px;
}

.filter-image,
.filter-type,
.filter-shape,
.filter-smart {
  margin-left: 28px;
}

.filter-adjust {
  margin-left: 25px;
}

.filter-toggle {
  width: 20px;
  height: 38px;
  margin: 1px 0 0 28px;
  border: 2px solid #5a5a5a;
  border-radius: 10px;
  background: #4a4a4a;
}

.filter-toggle::before {
  content: "";
  display: block;
  width: 16px;
  height: 16px;
  border-radius: 50%;
  background: #989598;
}

.blend-row {
  display: flex;
  height: 58px;
  padding: 9px 0 0 6px;
  border-bottom: 2px solid #424242;
}

.blend {
  width: 228px;
  padding-left: 13px;
}

.row-label {
  line-height: 38px;
  color: #848484;
}

.opacity-label {
  width: 86px;
  margin-left: 7px;
}

.number {
  display: flex;
  width: 109px;
  height: 38px;
  border: 2px solid #5f5f5f;
  border-radius: 6px;
  background: #4d4d4d;
  font-size: 22px;
  line-height: 36px;
  letter-spacing: -0.2px;
  color: #686868;
}

.number > span {
  width: 76px;
  padding-left: 6px;
}

.number > i {
  flex: 1;
  padding: 15px 0 0 7px;
  border-left: 2px solid #5f5f5f;
}

.lock-row {
  display: flex;
  height: 61px;
  padding: 9px 0 0 10px;
  border-bottom: 1px solid #4a4a4a;
  color: #989898;
}

.lock-label {
  width: 62px;
}

.lock-pixels {
  margin-left: 15px;
}

.lock-brush {
  margin-left: 21px;
}

.lock-move {
  margin-left: 16px;
}

.lock-artboard {
  margin-left: 18px;
}

.lock-all {
  margin-left: 20px;
}

.fill-label {
  width: 29px;
  margin-left: 14px;
}

.layer-area {
  display: flex;
  flex: 1;
}

.layer-list {
  flex: 1;
  background: #4b4b4b;
}

.layer-scroll {
  width: 30px;
  background: #474747;
}

.layer {
  display: flex;
  height: 85px;
  border-bottom: 2px solid #444;
}

.visibility {
  display: flex;
  align-items: center;
  justify-content: center;
  width: 61px;
  border-right: 2px solid #474747;
  background: #535353;
}

.layer-main {
  display: flex;
  flex: 1;
  align-items: center;
  height: 82px;
  margin-top: 1px;
  padding: 0 34px 0 7px;
  background: #6b6b6b;
}

.thumb {
  width: 64px;
  height: 64px;
  border: 2px solid #2a2a2a;
  background: #fff;
}

.layer-name {
  margin: -1px auto 0 16px;
  font-weight: 500;
  color: #fff;
}

.layers-footer {
  display: flex;
  height: 50px;
  padding-left: 72px;
  border-top: 2px solid #424242;
}

.link,
.fx,
.delete {
  color: #8e8e8e;
}

.fx {
  position: relative;
  width: 29px;
  margin-left: 30px;
  font: italic 27px/44px "Open Sans", sans-serif;
}

.fx > svg {
  position: absolute;
  right: 0;
  bottom: 8px;
  color: #6c6c6c;
}

.mask {
  margin-left: 24px;
}

.adjust {
  margin-left: 31px;
}

.group {
  margin-left: 23px;
}

.new-layer {
  margin-left: 31px;
}

.delete {
  margin-left: 32px;
}
```
